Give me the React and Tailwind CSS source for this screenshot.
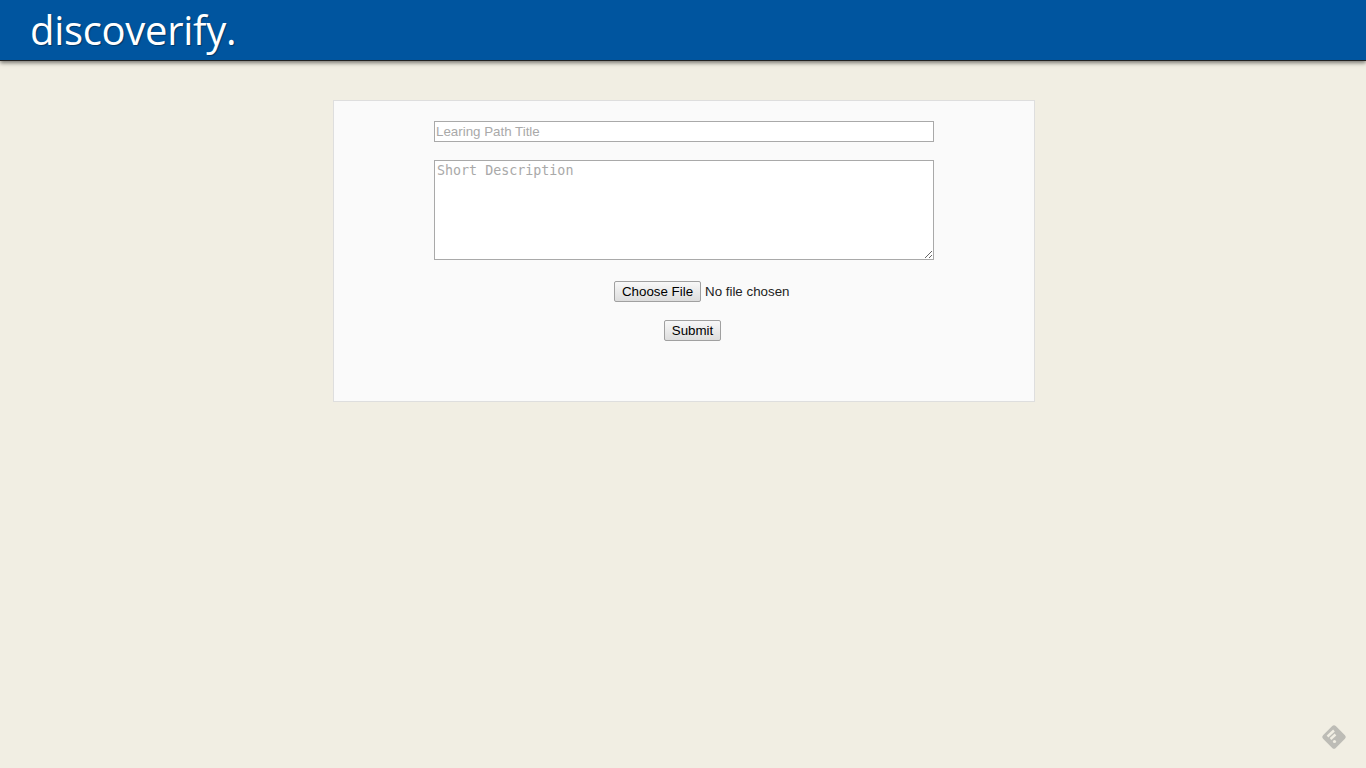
import React from 'react';

const FeedbackIcon = () => (
    <svg width="26" height="26" viewBox="0 0 26 26" className="block">
        <rect x="4" y="4" width="18" height="18" rx="2.5" fill="#bdbcb6" transform="rotate(45 13 13)" />
        <path d="M6.5 12.5 L13 6.5" stroke="#f1eee3" strokeWidth="2.4" />
        <path d="M9.5 15 L14.5 10.5" stroke="#f1eee3" strokeWidth="2.4" />
        <circle cx="13.5" cy="17.5" r="1.6" fill="#f1eee3" />
    </svg>
);

const App = () => {
    return (
        <div className="min-h-[768px] bg-[#f1eee3] relative font-['Liberation_Sans',sans-serif] overflow-hidden">
            <header className="h-[61px] bg-[#00559f] border-b border-[#222] shadow-[0_2px_4px_rgba(0,0,0,0.5)] pl-[30px]">
                <span className="block text-[40px] leading-[59px] text-white font-['Open_Sans',sans-serif] tracking-[-0.3px] [text-shadow:1px_1px_1px_rgba(0,0,0,0.35)]">discoverify.</span>
            </header>

            <div className="w-[702px] h-[302px] ml-[333px] mt-[39px] bg-[#fafafa] border border-[#dedede] pt-5 pl-[100px]">
                <form className="flex flex-col items-start">
                    <input
                        type="text"
                        placeholder="Learing Path Title"
                        className="w-[500px] h-[21px] bg-white border border-[#a9a9a9] px-[1px] text-[13.3333px] placeholder:text-[#a9a9a9] outline-none"
                    />
                    <textarea
                        placeholder="Short Description"
                        className="block w-[500px] h-[100px] mt-[18px] bg-white border border-[#a9a9a9] px-[2px] py-[2px] text-[13.3333px] leading-[16px] font-['DejaVu_Sans_Mono',monospace] placeholder:text-[#a9a9a9] outline-none"
                    />
                    <div className="flex items-center h-[21px] mt-[21px] ml-[180px] text-[13.3333px] text-[#222]">
                        <button type="button" className="h-[21px] w-[87px] bg-gradient-to-b from-[#f8f8f8] to-[#dddddd] border border-[#a0a0a0] rounded-[2px] text-black">Choose File</button>
                        <span className="ml-[4px]">No file chosen</span>
                    </div>
                    <button type="button" className="h-[21px] w-[57px] mt-[18px] ml-[230px] bg-gradient-to-b from-[#f8f8f8] to-[#dddddd] border border-[#a0a0a0] rounded-[2px] text-[13.3333px] text-black">Submit</button>
                </form>
            </div>

            <div className="absolute right-[19px] bottom-[18px]">
                <FeedbackIcon />
            </div>
        </div>
    );
};

export default App;
